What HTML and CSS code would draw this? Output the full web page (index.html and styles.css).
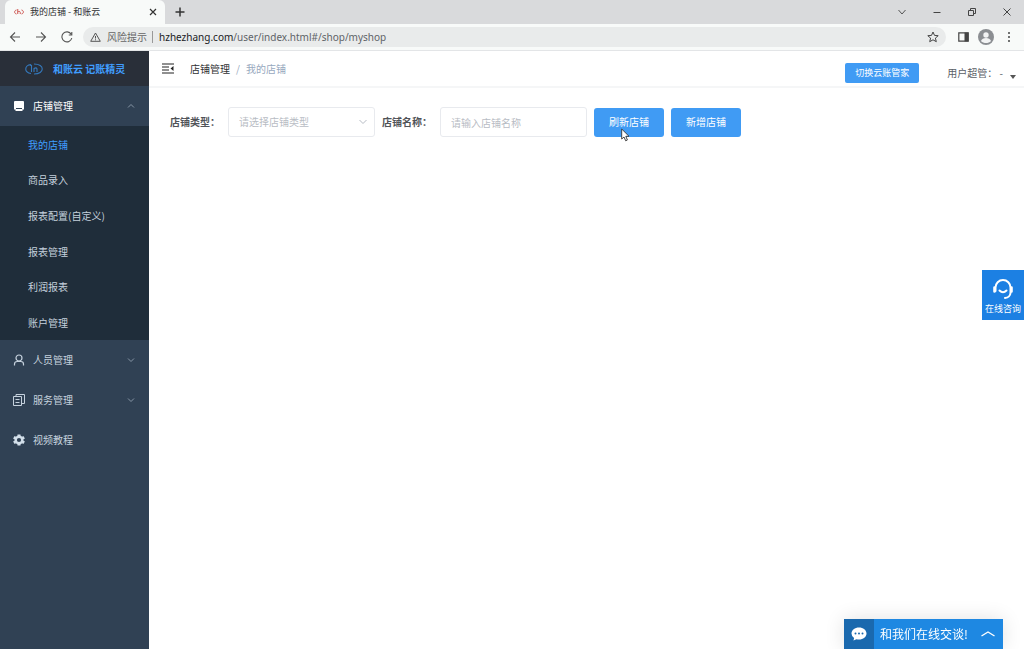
FILE: index.html
```html
<!DOCTYPE html>
<html lang="zh-CN">
<head>
<meta charset="utf-8">
<title>我的店铺 - 和账云</title>
<link rel="stylesheet" href="styles.css">
</head>
<body>
<div class="browser">
  <div class="tabstrip">
    <div class="tab">
      <svg class="favicon" width="10" height="8" viewBox="0 0 20 14" fill="none" stroke="#c8443f" stroke-width="1.800"><path d="M5 3C0 4 0 10 5 11M15 3c5 1 5 7 0 8M7.500 1v10M7.500 7c2-2 5-1.500 5 1v3"/></svg>
      <span class="tab-title">我的店铺 - 和账云</span>
      <button class="plain" aria-label="关闭标签页"><svg width="8" height="8" viewBox="0 0 8 8" stroke="#333" stroke-width="1.200"><path d="M1 1l6 6M7 1L1 7"/></svg></button>
    </div>
    <button class="plain new-tab" aria-label="新标签页"><svg width="10" height="10" viewBox="0 0 10 10" stroke="#333" stroke-width="1.500"><path d="M5 .5v9M.5 5h9"/></svg></button>
    <div class="window-controls">
      <button class="plain" aria-label="搜索标签页"><svg width="10" height="10" viewBox="0 0 10 10" fill="none" stroke="#555"><path d="M1.500 3L5 7l3.500-4"/></svg></button>
      <button class="plain" aria-label="最小化"><svg width="10" height="10" viewBox="0 0 10 10" stroke="#444"><path d="M1.500 5.500h7"/></svg></button>
      <button class="plain" aria-label="还原"><svg width="10" height="10" viewBox="0 0 10 10" fill="none" stroke="#444"><path d="M1.500 3.500h5v5h-5zM3.500 3.500v-2h5v5h-2"/></svg></button>
      <button class="plain" aria-label="关闭"><svg width="10" height="10" viewBox="0 0 10 10" stroke="#444"><path d="M1.500 1.500l7 7M8.500 1.500l-7 7"/></svg></button>
    </div>
  </div>
  <div class="toolbar">
    <button class="plain" aria-label="后退"><svg width="12" height="12" viewBox="0 0 12 12" fill="none" stroke="#555" stroke-width="1.100"><path d="M11 6H1.500M6 1.500L1.500 6 6 10.500"/></svg></button>
    <button class="plain" aria-label="前进"><svg width="12" height="12" viewBox="0 0 12 12" fill="none" stroke="#555" stroke-width="1.100"><path d="M1 6h9.500M6 1.500L10.500 6 6 10.500"/></svg></button>
    <button class="plain" aria-label="重新加载"><svg width="12" height="12" viewBox="0 0 12 12" fill="none" stroke="#555" stroke-width="1.100"><path d="M10.800 7A5 5 0 1 1 10.200 3.300M10.800 1v3H7.800"/></svg></button>
    <div class="address">
      <svg width="11" height="10" viewBox="0 0 11 10" fill="none" stroke="#555"><path d="M5.500 1L10.300 9.300H.7zM5.500 4v2.500M5.500 7.300v1"/></svg>
      <span class="risk">风险提示</span>
      <span class="url"><b>hzhezhang.com</b>/user/index.html#/shop/myshop</span>
      <button class="plain star" aria-label="收藏"><svg width="12" height="12" viewBox="0 0 12 12" fill="none" stroke="#444"><path d="M6 1l1.500 3.400 3.700.3-2.800 2.400.9 3.600L6 8.800l-3.300 1.900.9-3.600L.8 4.700l3.700-.3z"/></svg></button>
    </div>
    <div class="tools">
      <button class="plain" aria-label="侧边栏"><svg width="11" height="10" viewBox="0 0 11 10"><path d="M.8.800h9.400v8.400H.8z" fill="none" stroke="#444" stroke-width="1.200"/><path d="M6.500.500h4v9h-4z" fill="#444"/></svg></button>
      <button class="plain" aria-label="用户"><svg width="16" height="16" viewBox="0 0 16 16"><circle cx="8" cy="8" r="8" fill="#8b8e92"/><circle cx="8" cy="6" r="2.700" fill="#f2f3f4"/><path d="M3 12c1-4 9-4 10 0-2.500 2.700-7.500 2.700-10 0z" fill="#f2f3f4"/></svg></button>
      <button class="plain menu-dots" aria-label="更多"><svg width="4" height="12" viewBox="0 0 4 12" fill="#444"><circle cx="2" cy="2" r="1"/><circle cx="2" cy="6" r="1"/><circle cx="2" cy="10" r="1"/></svg></button>
    </div>
  </div>
</div>
<div class="app">
  <aside class="sidebar">
    <div class="brand">
      <svg width="18" height="12" viewBox="0 0 18 12" fill="none" stroke="#3479bd" stroke-width="1.100"><path d="M6 1.500C-1 2.500-1 9.500 6 10.500M9 1c11 0 11 10 0 10M6.500 2v7M9 9V5.500q2.500-1.500 3 .5v3M6.500 2L5 2.500"/></svg>
      <span>和账云 记账精灵</span>
    </div>
    <nav>
      <a class="menu menu-open" href="#shop">
        <svg width="12" height="12" viewBox="0 0 12 12" fill="#fff"><path d="M2 1h8q1 0 1 1v6H1V2q0-1 1-1zM2.500 9h7v2h-7zM1 8h2v1.500H1zM9 8h2v1.500H9z"/></svg>
        <span>店铺管理</span>
        <svg class="caret" width="8" height="8" viewBox="0 0 8 8"><path d="M1 5.500L4 2.500l3 3"/></svg>
      </a>
      <div class="submenu">
        <a class="active" href="#myshop">我的店铺</a>
        <a href="#goods">商品录入</a>
        <a href="#config">报表配置(自定义)</a>
        <a href="#reports">报表管理</a>
        <a href="#profit">利润报表</a>
        <a href="#account">账户管理</a>
      </div>
      <a class="menu" href="#people">
        <svg width="12" height="12" viewBox="0 0 12 12" fill="none" stroke="#c5d1dd" stroke-width="1.200"><circle cx="6" cy="4" r="3"/><path d="M1.500 11.500V10q0-2.500 2.700-2.500h3.600q2.700 0 2.700 2.500v1.500"/></svg>
        <span>人员管理</span>
        <svg class="caret" width="8" height="8" viewBox="0 0 8 8"><path d="M1 2.500l3 3 3-3"/></svg>
      </a>
      <a class="menu" href="#service">
        <svg width="12" height="12" viewBox="0 0 12 12" fill="none" stroke="#c5d1dd"><path d="M.5 2.500h8v9h-8zM3 2.500v-2h8.500v9h-3M2.500 5.500h4M2.500 8.500h4"/></svg>
        <span>服务管理</span>
        <svg class="caret" width="8" height="8" viewBox="0 0 8 8"><path d="M1 2.500l3 3 3-3"/></svg>
      </a>
      <a class="menu" href="#video">
        <svg width="12" height="12" viewBox="0 0 12 12"><circle cx="6" cy="6" r="3.300" fill="none" stroke="#d3dfea" stroke-width="2.400"/><path d="M4.500.500h3v2h-3zM4.500 9.500h3v2h-3zM.1 4.500l1.500-2.600 1.700 1-1.500 2.600zM8.700 9.100l1.500-2.600 1.700 1-1.500 2.600zM.1 7.500l1.700-1 1.500 2.600-1.700 1zM8.700 2.900l1.700-1 1.500 2.600-1.700 1z" fill="#d3dfea"/></svg>
        <span>视频教程</span>
      </a>
    </nav>
  </aside>
  <main class="main">
    <header class="topbar">
      <button class="plain" aria-label="收起菜单"><svg width="12" height="11" viewBox="0 0 12 11"><path d="M0 1h12M0 4h7M0 7h7M0 10h12" stroke="#222" stroke-width="1.200"/><path d="M11.500 3v5L8.500 5.500z" fill="#222"/></svg></button>
      <div class="crumbs"><a href="#shop">店铺管理</a><span>/</span><span>我的店铺</span></div>
      <button class="primary switch">切换云账管家</button>
      <button class="plain user">用户超管： -<svg width="6" height="4" viewBox="0 0 6 4" fill="#555"><path d="M0 0h6L3 4z"/></svg></button>
    </header>
    <form class="filters">
      <label for="type">店铺类型：</label>
      <div class="select">
        <select id="type"><option>请选择店铺类型</option></select>
        <svg width="8" height="8" viewBox="0 0 8 8" fill="none" stroke="#b5bac3"><path d="M.5 2L4 5.500 7.500 2"/></svg>
      </div>
      <label for="name">店铺名称：</label>
      <input id="name" type="text" placeholder="请输入店铺名称">
      <button class="primary" type="button">刷新店铺</button>
      <button class="primary" type="button">新增店铺</button>
    </form>
  </main>
</div>
<button class="consult">
  <svg width="22" height="22" viewBox="0 0 22 22" fill="none" stroke="#fff" stroke-linecap="round"><path d="M3.500 13V9.500a7.500 7.500 0 0 1 15 0V15q-.5 4.500-5.500 5" stroke-width="2"/><path d="M2.500 9.500v4M19.500 9.500v4" stroke-width="2.600"/><path d="M7.500 12.500q3.500 3.500 7 0" stroke-width="2"/></svg>
  <span>在线咨询</span>
</button>
<button class="chat">
  <span class="chat-icon"><svg width="16" height="14" viewBox="0 0 16 14"><path d="M8 .5c4.200 0 7.500 2.600 7.500 6S12.200 12.500 8 12.500q-1.300 0-2.500-.3L2.500 13.500l.6-2.500Q.5 9.300.5 6.500C.5 3.100 3.800.5 8 .5z" fill="#fff"/><g fill="#1a69ae"><circle cx="4.500" cy="6.500" r="1"/><circle cx="8" cy="6.500" r="1"/><circle cx="11.500" cy="6.500" r="1"/></g></svg></span>
  <span>和我们在线交谈!</span>
  <svg width="14" height="6" viewBox="0 0 14 6" fill="none" stroke="#fff" stroke-width="1.400"><path d="M.5 5L7 1l6.500 4"/></svg>
</button>
<svg class="cursor" width="9" height="14" viewBox="0 0 9 14"><path d="M.7 1v10l2.300-2 1.700 3.800 1.700-.8L4.800 8.300H8z" fill="#fff" stroke="#333" stroke-width=".9"/></svg>
</body>
</html>
```

FILE: styles.css
```css
* { box-sizing: border-box; }
body {
  margin: 0;
  min-height: 100vh;
  display: flex;
  flex-direction: column;
  background: #fff;
  color: #303133;
  font: 10px/16px "Noto Sans CJK SC", sans-serif;
}
button, input, select { font: inherit; }
a { color: inherit; text-decoration: none; }
svg { flex: none; }
.plain {
  display: flex;
  align-items: center;
  padding: 0;
  border: 0;
  background: none;
}
.tabstrip {
  display: flex;
  align-items: center;
  height: 24px;
  padding-left: 5px;
  background: #d9dadc;
}
.tab {
  display: flex;
  align-items: center;
  gap: 6px;
  width: 160px;
  height: 24px;
  padding: 0 8px 0 9px;
  border-radius: 6px 6px 0 0;
  background: #f8faf9;
}
.tab-title { flex: 1; font-size: 9px; }
.new-tab { margin-left: 10px; }
.window-controls {
  display: flex;
  gap: 25px;
  margin-left: auto;
  padding-right: 12px;
}
.toolbar {
  display: flex;
  align-items: center;
  gap: 14px;
  height: 27px;
  padding: 0 13px 0 9px;
  border-bottom: 1px solid #e3e5e7;
  background: #f8faf9;
}
.tools {
  display: flex;
  align-items: center;
  gap: 9px;
  margin-left: -2px;
}
.menu-dots { margin-left: 4px; }
.address {
  display: flex;
  flex: 1;
  align-items: center;
  gap: 6px;
  height: 20px;
  margin-left: -4px;
  padding: 0 7px;
  border-radius: 10px;
  background: #e9ebeb;
}
.risk {
  padding-right: 5px;
  border-right: 1px solid #999;
  color: #666;
  line-height: 12px;
}
.url { color: #5f6368; font: 10px/16px "Noto Sans", sans-serif; }
.url b { color: #202124; font-weight: 400; }
.star { margin-left: auto; }
.app { display: flex; flex: 1; }
.sidebar { width: 149px; background: #304154; color: #c5d1dd; }
.brand {
  display: flex;
  align-items: center;
  gap: 10px;
  height: 35px;
  padding-left: 25px;
  background: #292f39;
  color: #409eff;
  font-weight: 700;
}
.menu {
  display: flex;
  align-items: center;
  gap: 8px;
  height: 40px;
  padding: 0 14px 0 13px;
}
.menu-open { color: #fff; }
.caret {
  margin-left: auto;
  fill: none;
  stroke: #8796a6;
}
.submenu {
  display: grid;
  grid-auto-rows: 1fr;
  height: 214px;
  background: #1f2d3a;
}
.submenu a {
  display: flex;
  align-items: center;
  padding: 2px 0 0 28px;
}
.submenu .active { color: #409eff; }
.main { flex: 1; min-width: 0; }
.topbar {
  display: flex;
  align-items: center;
  height: 37px;
  padding: 0 8px 0 13px;
  border-bottom: 2px solid #f5f6f7;
}
.crumbs {
  display: flex;
  gap: 6px;
  margin: 0 auto 0 16px;
  color: #97a8be;
}
.crumbs a { color: #303133; }
.primary {
  height: 29px;
  padding: 0 15px;
  border: 0;
  border-radius: 3px;
  background: #409bf4;
  color: #fff;
}
.primary.switch {
  height: 20px;
  margin-top: 8px;
  padding: 0 10px;
  border-radius: 2px;
  font-size: 9px;
  line-height: 18px;
}
.user {
  gap: 7px;
  margin: 8px 0 0 28px;
  color: #5a5e66;
}
.user svg { margin-top: 8px; }
.filters {
  display: flex;
  align-items: center;
  gap: 7px;
  padding: 19px 21px;
}
.filters label { width: 51px; color: #505358; font-weight: 700; white-space: nowrap; }
.select { position: relative; }
.select svg {
  position: absolute;
  top: 11px;
  right: 8px;
  pointer-events: none;
}
.filters select, .filters input {
  display: block;
  width: 147px;
  height: 30px;
  padding: 0 10px;
  border: 1px solid #e8eaee;
  border-radius: 3px;
  outline: 0;
  appearance: none;
  background: #fff;
  color: #b8bcc4;
}
.filters input::placeholder { color: #b8bcc4; }
.consult {
  position: fixed;
  top: 270px;
  right: 0;
  display: flex;
  flex-direction: column;
  align-items: center;
  gap: 2px;
  width: 42px;
  height: 50px;
  padding: 8px 0 0;
  border: 0;
  background: #1c80e3;
  color: #fff;
  font-size: 9px;
  line-height: 14px;
}
.chat {
  position: fixed;
  right: 21px;
  bottom: 0;
  display: flex;
  align-items: center;
  width: 159px;
  height: 30px;
  padding: 0 8px 0 0;
  border: 0;
  background: #1e88e2;
  box-shadow: 0 0 20px rgba(0, 0, 0, .12);
  color: #fff;
  font-size: 12px;
}
.chat-icon {
  display: flex;
  align-items: center;
  justify-content: center;
  width: 30px;
  height: 30px;
  margin-right: 6px;
  background: #1a69ae;
}
.chat > svg { margin-left: auto; }
.cursor {
  position: fixed;
  top: 128px;
  left: 621px;
}
```
